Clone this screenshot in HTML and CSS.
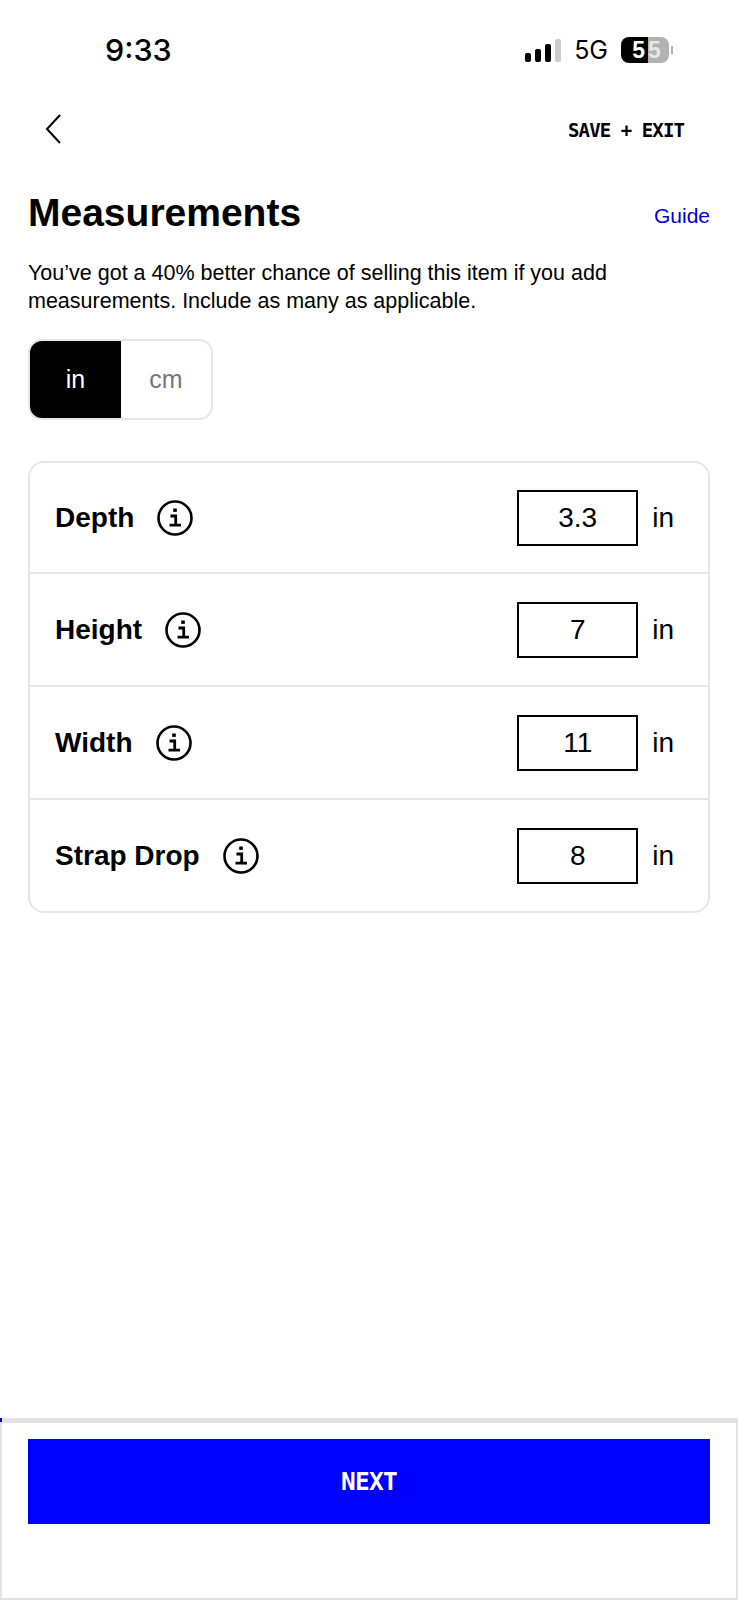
FILE: index.html
```html
<!DOCTYPE html>
<html lang="en">
<head>
    <meta charset="UTF-8">
    <meta name="viewport" content="width=device-width, initial-scale=1.0">
    <title>Measurements</title>
    <link rel="stylesheet" href="styles.css">
</head>
<body>
    <div class="screen">
        <div class="status-bar">
            <span class="time">9:33</span>
            <div class="status-right">
                <div class="signal">
                    <span class="bar bar-1"></span>
                    <span class="bar bar-2"></span>
                    <span class="bar bar-3"></span>
                    <span class="bar bar-4"></span>
                </div>
                <span class="network">5G</span>
                <div class="battery">
                    <span class="battery-fill">5</span>
                    <span class="battery-rest">5</span>
                </div>
                <span class="battery-nub"></span>
            </div>
        </div>

        <div class="nav">
            <svg class="back" width="20" height="32" viewBox="0 0 20 32" fill="none" stroke="#000" stroke-width="2">
                <path d="M16 2 L3 16 L16 30"/>
            </svg>
            <span class="save-exit">SAVE + EXIT</span>
        </div>

        <div class="title-row">
            <h1>Measurements</h1>
            <a class="guide">Guide</a>
        </div>
        <p class="intro">You’ve got a 40% better chance of selling this item if you add measurements. Include as many as applicable.</p>

        <div class="toggle">
            <div class="toggle-item active">in</div>
            <div class="toggle-item">cm</div>
        </div>

        <div class="card">
            <div class="row">
                <span class="label">Depth</span>
                <svg class="info" viewBox="0 0 36 36" fill="none" stroke="#000"><circle cx="18" cy="18" r="16.5" stroke-width="2.6"/><path d="M18 8.5v3.4" stroke-width="3.6"/><path d="M13.5 16h5.2v9M12.5 25.2h11.5" stroke-width="2.8"/></svg>
                <div class="value">3.3</div>
                <span class="unit">in</span>
            </div>
            <div class="row">
                <span class="label">Height</span>
                <svg class="info" viewBox="0 0 36 36" fill="none" stroke="#000"><circle cx="18" cy="18" r="16.5" stroke-width="2.6"/><path d="M18 8.5v3.4" stroke-width="3.6"/><path d="M13.5 16h5.2v9M12.5 25.2h11.5" stroke-width="2.8"/></svg>
                <div class="value">7</div>
                <span class="unit">in</span>
            </div>
            <div class="row">
                <span class="label">Width</span>
                <svg class="info" viewBox="0 0 36 36" fill="none" stroke="#000"><circle cx="18" cy="18" r="16.5" stroke-width="2.6"/><path d="M18 8.5v3.4" stroke-width="3.6"/><path d="M13.5 16h5.2v9M12.5 25.2h11.5" stroke-width="2.8"/></svg>
                <div class="value">11</div>
                <span class="unit">in</span>
            </div>
            <div class="row">
                <span class="label">Strap Drop</span>
                <svg class="info" viewBox="0 0 36 36" fill="none" stroke="#000"><circle cx="18" cy="18" r="16.5" stroke-width="2.6"/><path d="M18 8.5v3.4" stroke-width="3.6"/><path d="M13.5 16h5.2v9M12.5 25.2h11.5" stroke-width="2.8"/></svg>
                <div class="value">8</div>
                <span class="unit">in</span>
            </div>
        </div>

        <div class="footer">
            <div class="next">NEXT</div>
        </div>
    </div>
</body>
</html>
```

FILE: styles.css
```css
* {
    box-sizing: border-box;
}
body {
    margin: 0;
    font-family: "Liberation Sans", Arial, sans-serif;
    background: #fff;
    color: #000;
}
.screen {
    width: 738px;
    height: 1600px;
    display: flex;
    flex-direction: column;
}
.status-bar {
    height: 100px;
    display: flex;
    justify-content: space-between;
    align-items: flex-start;
    padding: 33px 65px 0 105px;
}
.time {
    font-family: Inter, sans-serif;
    font-size: 30.5px;
    line-height: 34px;
    font-weight: 500;
}
.status-right {
    display: flex;
    align-items: center;
    margin-top: 2px;
}
.signal {
    display: flex;
    align-items: flex-end;
    gap: 3.5px;
    height: 24px;
}
.bar {
    width: 6.5px;
    background: #000;
    border-radius: 2px;
}
.bar-1 { height: 9px; }
.bar-2 { height: 13px; }
.bar-3 { height: 18px; }
.bar-4 { height: 23px; background: #ccc; }
.network {
    font-family: Inter, sans-serif;
    font-size: 25px;
    margin-left: 13px;
}
.battery {
    display: flex;
    width: 48px;
    height: 26px;
    margin-left: 13px;
    border-radius: 8px;
    overflow: hidden;
    font-size: 23px;
    line-height: 26px;
    font-weight: bold;
}
.battery-fill {
    width: 27px;
    background: #000;
    color: #fff;
    text-align: right;
    padding-right: 3px;
}
.battery-rest {
    flex: 1;
    background: #b2b2b2;
    color: #e6e6e6;
}
.battery-nub {
    width: 2px;
    height: 8px;
    margin-left: 2px;
    background: #b2b2b2;
}
.nav {
    height: 58px;
    display: flex;
    justify-content: space-between;
    align-items: center;
    padding: 0 54px 0 44px;
}
.save-exit {
    font-family: "DejaVu Sans Mono", monospace;
    font-weight: bold;
    font-size: 19px;
    letter-spacing: -0.9px;
    margin-top: 2px;
}
.title-row {
    display: flex;
    justify-content: space-between;
    align-items: center;
    padding: 30px 28px 0;
}
h1 {
    margin: 0;
    font-size: 39px;
    line-height: 50px;
    font-weight: bold;
}
.guide {
    color: #0000d8;
    font-size: 21px;
    margin-top: 5px;
}
.intro {
    margin: 21px 28px 0;
    font-size: 21.5px;
    line-height: 28px;
    width: 600px;
}
.toggle {
    display: flex;
    width: 185px;
    height: 81px;
    margin: 24px 0 0 28px;
    border: 2px solid #e6e6e6;
    border-radius: 14px;
    overflow: hidden;
}
.toggle-item {
    flex: 1;
    display: flex;
    align-items: center;
    justify-content: center;
    font-size: 25px;
    color: #777;
}
.toggle-item.active {
    flex: none;
    width: 91px;
    background: #000;
    color: #fff;
}
.card {
    margin: 41px 28px 0;
    border: 2px solid #e6e6e6;
    border-radius: 16px;
}
.row {
    height: 113px;
    display: flex;
    align-items: center;
    padding: 0 34px 0 25px;
    border-bottom: 2px solid #e6e6e6;
}
.row:first-child {
    height: 111px;
}
.row:last-child {
    height: 111px;
    border-bottom: none;
}
.label {
    font-size: 28px;
    font-weight: bold;
}
.info {
    width: 36px;
    height: 36px;
    margin-left: 23px;
}
.value {
    width: 121px;
    height: 56px;
    margin-left: auto;
    border: 2px solid #000;
    display: flex;
    align-items: center;
    justify-content: center;
    font-size: 28px;
}
.unit {
    margin-left: 14px;
    font-size: 28px;
}
.footer {
    position: relative;
    margin-top: auto;
    height: 182px;
    border: 2px solid #e2e2e2;
    border-top: 5px solid #e2e2e2;
    padding: 16px 26px 0;
}
.footer::before {
    content: "";
    position: absolute;
    left: -2px;
    top: -5px;
    width: 2px;
    height: 4px;
    background: #0000d0;
}
.next {
    height: 85px;
    background: #0000ff;
    color: #fff;
    display: flex;
    align-items: center;
    justify-content: center;
    font-family: "DejaVu Sans Mono", monospace;
    font-weight: bold;
    font-size: 24.5px;
    letter-spacing: -0.8px;
}
```
